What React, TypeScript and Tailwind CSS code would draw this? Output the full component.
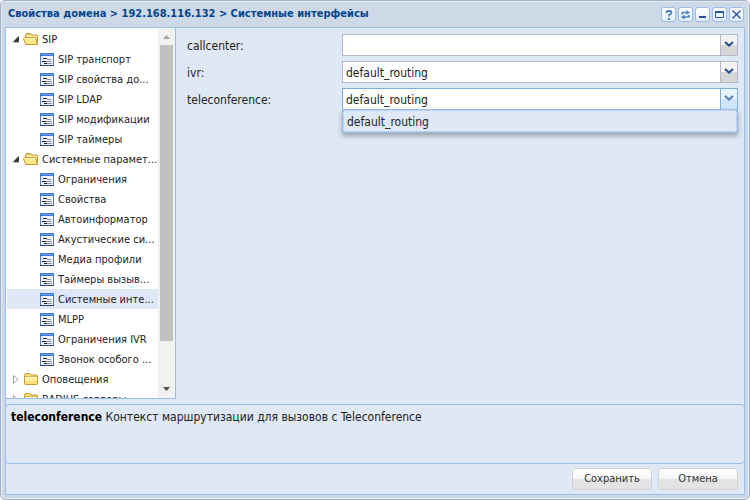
import React, { useState } from 'react';

interface TreeNode {
  label: string;
  open?: boolean;
  children?: string[];
}

const TREE: TreeNode[] = [
  {
    label: 'SIP',
    open: true,
    children: ['SIP транспорт', 'SIP свойства до...', 'SIP LDAP', 'SIP модификации', 'SIP таймеры'],
  },
  {
    label: 'Системные парамет...',
    open: true,
    children: [
      'Ограничения',
      'Свойства',
      'Автоинформатор',
      'Акустические си...',
      'Медиа профили',
      'Таймеры вызыв...',
      'Системные инте...',
      'MLPP',
      'Ограничения IVR',
      'Звонок особого ...',
    ],
  },
  { label: 'Оповещения' },
  { label: 'RADIUS серверы' },
];

const FolderIcon: React.FC<{ open?: boolean }> = ({ open }) => (
  <svg width="16" height="16" viewBox="0 0 16 16" className="shrink-0" aria-hidden="true">
    {open ? (
      <>
        <path d="M2.5 13V4.5q0-2 1.500-2h3.500q1 0 1.500 1.500h4.500q1 0 1 1v8z" fill="#f6d978" stroke="#c39a3a" />
        <path d="M3.500 5.500h10.500" stroke="#fff3b4" />
        <path d="M2.500 13.500L0.500 7.500q0-1 1-1h10q1 0 1.300 1l1.700 6z" fill="#ffe88c" stroke="#c39a3a" />
        <path d="M1.500 7.500h10.500" stroke="#fff9cf" />
      </>
    ) : (
      <>
        <path d="M1.500 12.500V4.500q0-2 1.500-2h3.500q1 0 1.500 1.500h5.500q1 0 1 1v7.500q0 1-1 1h-11q-1 0-1-1z" fill="#fbdf78" stroke="#c39a3a" />
        <path d="M2 5.500h12" stroke="#d9b455" />
        <path d="M2 6.500h12" stroke="#fffad0" />
        <path d="M2 7h12v3H2z" fill="#ffee9d" />
      </>
    )}
  </svg>
);

const LeafIcon = () => (
  <svg width="14" height="13" viewBox="0 0 14 13" className="shrink-0" shapeRendering="crispEdges" aria-hidden="true">
    <rect width="14" height="13" fill="#5577b5" />
    <rect width="14" height="3" fill="#3f74cc" />
    <rect x="1" y="1" width="12" height="1" fill="#6ea5f0" />
    <rect x="1" y="3" width="12" height="9" fill="#eef4fd" />
    <path d="M3 5.500h4M2 8.500h4M4 10.500h3" stroke="#222" />
    <path d="M7 6.500h4M6 8.500h6M7 10.500h5" stroke="#8a93a3" />
    <path d="M0 12.500h14" stroke="#2f4470" />
  </svg>
);

const Expander: React.FC<{ open?: boolean }> = ({ open }) => (
  <svg width="16" height="16" viewBox="0 0 16 16" className="shrink-0" aria-hidden="true">
    {open ? (
      <path d="M11.500 5.500v5.500h-5z" fill="#3a3a3a" stroke="#333" strokeWidth="0.8" />
    ) : (
      <path d="M6.500 4.500l4.500 4-4.500 4z" fill="#fff" stroke="#a0a0a0" />
    )}
  </svg>
);

const TOOLS = [
  {
    name: 'Справка',
    art: (
      <>
        <path d="M4.500 5V4q0-1 1-1h2.500q1.500 0 1.500 1.500T7 7v1.500" stroke="#4d82bd" strokeWidth="1.800" />
        <path d="M6 10h2v2H6z" fill="#4d82bd" />
      </>
    ),
  },
  {
    name: 'Обновить',
    art: (
      <>
        <path d="M3 6.500V5q0-.5.5-.5H8M10 7v1.500q0 .5-.5.5H5" stroke="#4d82bd" strokeWidth="1.600" />
        <path d="M7.500 2v5L11 4.500zM5.500 6.500v5L2 9z" fill="#4d82bd" />
      </>
    ),
  },
  { name: 'Свернуть', art: <path d="M3 9h7" stroke="#2d4fa0" strokeWidth="2" /> },
  {
    name: 'Развернуть',
    art: (
      <>
        <path d="M2.500 3.500h8v6h-8z" stroke="#2d4fa0" />
        <path d="M2 4h9" stroke="#2d4fa0" strokeWidth="2" />
      </>
    ),
  },
  { name: 'Закрыть', art: <path d="M2.500 2.500l8 8M10.500 2.500l-8 8" stroke="#2d4fa0" strokeWidth="1.400" /> },
];

const TitleBar = () => (
  <header className="flex h-[26px] items-center justify-between pr-px pl-[3px]">
    <h1 className="truncate text-[11px] leading-4 font-bold text-[#04468c]">
      Свойства домена &gt; 192.168.116.132 &gt; Системные интерфейсы
    </h1>
    <div className="flex gap-[2px]">
      {TOOLS.map((tool) => (
        <button
          key={tool.name}
          type="button"
          aria-label={tool.name}
          className="flex size-[15px] items-center justify-center rounded-[3px] border border-[#99bce8] bg-linear-to-b from-white to-[#dfeefc]"
        >
          <svg width="13" height="13" viewBox="0 0 13 13" fill="none" className="shrink-0" aria-hidden="true">
            {tool.art}
          </svg>
        </button>
      ))}
    </div>
  </header>
);

interface TreeProps {
  selected: string;
  onSelect: (label: string) => void;
}

const SettingsTree: React.FC<TreeProps> = ({ selected, onSelect }) => (
  <nav className="flex w-[171px] shrink-0 overflow-hidden border border-[#99bce8] bg-white pl-px">
    <ul className="min-w-0 flex-1 pt-px leading-4">
      {TREE.map((node) => (
        <li key={node.label}>
          <button type="button" className="flex h-5 w-full items-center text-left whitespace-nowrap">
            <Expander open={node.open} />
            <FolderIcon open={node.open} />
            <span className="pt-px pl-[3px]">{node.label}</span>
          </button>
          {node.children && (
            <ul>
              {node.children.map((label) => (
                <li key={label}>
                  <button
                    type="button"
                    onClick={() => onSelect(label)}
                    className={`flex h-5 w-full items-center gap-1 pl-[33px] text-left whitespace-nowrap ${
                      label === selected ? 'bg-[#dfe8f6]' : ''
                    }`}
                  >
                    <LeafIcon />
                    <span className="pt-px">{label}</span>
                  </button>
                </li>
              ))}
            </ul>
          )}
        </li>
      ))}
    </ul>
    {/* Scrollbar */}
    <div className="flex w-[17px] shrink-0 flex-col items-center bg-[#f1f1f1]" aria-hidden="true">
      <svg width="17" height="17" viewBox="0 0 17 17">
        <path d="M5 11l3.500-4 3.500 4z" fill="#a3a3a3" />
      </svg>
      <div className="min-h-0 w-full flex-1 px-[2px]">
        <div className="h-[88%] bg-[#c1c1c1]" />
      </div>
      <svg width="17" height="17" viewBox="0 0 17 17">
        <path d="M5 6l3.500 4L12 6z" fill="#505050" />
      </svg>
    </div>
  </nav>
);

interface ComboProps {
  name: string;
  value: string;
  onChange: (value: string) => void;
  expanded?: boolean;
}

const Combo: React.FC<ComboProps> = ({ name, value, onChange, expanded }) => (
  <div className="flex items-center">
    <label htmlFor={name} className="w-[155px] shrink-0 pt-px">
      {name}:
    </label>
    <div className="relative min-w-0 flex-1">
      <select
        id={name}
        value={value}
        onChange={(e) => onChange(e.target.value)}
        className={`block h-[22px] w-full appearance-none border bg-white pt-px pr-5 pl-[3px] outline-none ${
          expanded ? 'border-[#7eadd9]' : 'border-[#b5b8c8]'
        }`}
      >
        <option value="" />
        <option value="default_routing">default_routing</option>
      </select>
      <span
        className={`pointer-events-none absolute inset-y-0 right-0 flex w-[18px] items-center justify-center border ${
          expanded
            ? 'border-[#7eadd9] bg-linear-to-b from-[#e6f3ff] from-50% to-[#cfe5fb] to-50%'
            : 'border-[#b5b8c8] bg-linear-to-b from-[#f3f3f3] from-50% to-[#d6d6d6] to-50%'
        }`}
      >
        <svg width="10" height="8" viewBox="0 0 10 8" fill="none" aria-hidden="true">
          <path d="M1 1l4 3.500L9 1" stroke={expanded ? '#5c80b4' : '#2a4f8c'} strokeWidth="2.200" />
        </svg>
      </span>
      {expanded && (
        <ul
          role="listbox"
          className="absolute inset-x-0 top-full z-10 -mt-px border border-[#99bbe8] bg-white shadow-[0_3px_5px_rgba(0,0,0,0.3)]"
        >
          <li
            role="option"
            aria-selected="true"
            className="h-[22px] border border-dotted border-[#a3bae9] bg-[#dfe8f6] px-[3px] pt-px leading-5"
          >
            default_routing
          </li>
        </ul>
      )}
    </div>
  </div>
);

export default function App() {
  const [selected, setSelected] = useState('Системные инте...');
  const [values, setValues] = useState<Record<string, string>>({
    callcenter: '',
    ivr: 'default_routing',
    teleconference: 'default_routing',
  });

  return (
    <div className="flex h-screen flex-col rounded-[5px] border border-[#a2b1c5] bg-[#ced9e7] px-1 pb-1 font-['DejaVu_Sans_Condensed','DejaVu_Sans',sans-serif] text-[11px] text-[#222] shadow-[inset_0_0_0_1px_#e3ebf5]">
      <TitleBar />
      <main className="flex min-h-0 flex-1 flex-col border border-[#99bce8] bg-[#dfe8f5]">
        <div className="-mt-px -ml-px flex min-h-0 flex-1">
          <SettingsTree selected={selected} onSelect={setSelected} />
          <form className="flex flex-1 flex-col gap-[5px] pt-[7px] pr-[6px] pl-[11px] text-[12px]">
            {Object.keys(values).map((name) => (
              <Combo
                key={name}
                name={name}
                value={values[name]}
                onChange={(value) => setValues({ ...values, [name]: value })}
                expanded={name === 'teleconference'}
              />
            ))}
          </form>
        </div>
        <p className="-mx-px mt-[5px] h-[60px] shrink-0 rounded-[4px] border border-[#99bce8] px-[5px] pt-1 text-[12px] leading-4">
          <b className="text-black">teleconference</b> Контекст маршрутизации для вызовов с Teleconference
        </p>
        <footer className="flex shrink-0 justify-end gap-[6px] px-[6px] pt-1 pb-1">
          {['Сохранить', 'Отмена'].map((label) => (
            <button
              key={label}
              type="button"
              className="h-[22px] w-20 rounded-[3px] border border-[#d1d1d1] bg-linear-to-b from-white via-[#f5f5f5] via-50% to-[#e3e3e3] to-50% pt-px text-[#333]"
            >
              {label}
            </button>
          ))}
        </footer>
      </main>
    </div>
  );
}
